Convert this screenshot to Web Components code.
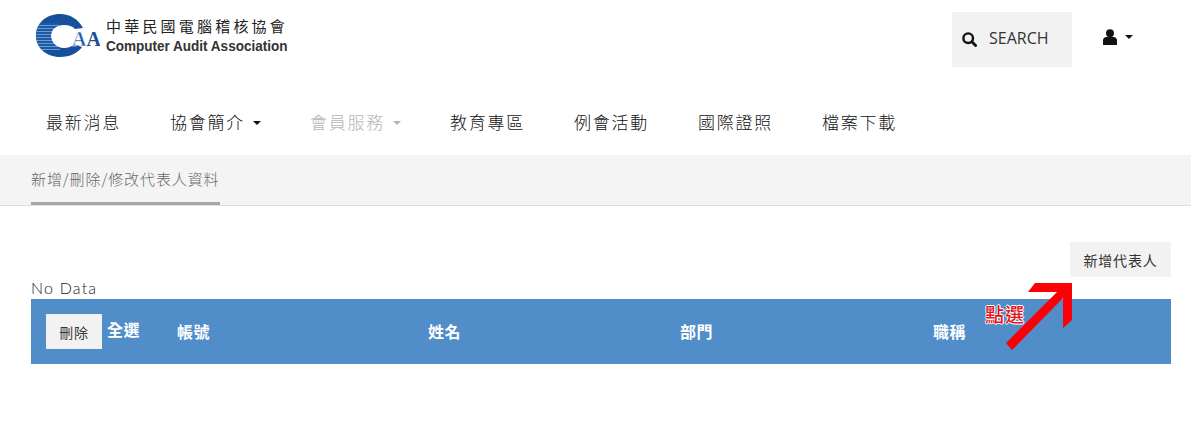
<!DOCTYPE html>
<html lang="zh-Hant">
<head>
<meta charset="utf-8">
<title>新增/刪除/修改代表人資料</title>
<style>
  html, body { margin: 0; background: #fff; }
  body { font-family: "Open Sans", "Noto Sans CJK TC", sans-serif; color: #222; }
</style>
</head>
<body>
<caa-header></caa-header>
<caa-nav>
  <caa-nav-item>最新消息</caa-nav-item>
  <caa-nav-item caret>協會簡介</caa-nav-item>
  <caa-nav-item caret disabled>會員服務</caa-nav-item>
  <caa-nav-item>教育專區</caa-nav-item>
  <caa-nav-item>例會活動</caa-nav-item>
  <caa-nav-item>國際證照</caa-nav-item>
  <caa-nav-item>檔案下載</caa-nav-item>
</caa-nav>
<caa-tabbar label="新增/刪除/修改代表人資料"></caa-tabbar>
<caa-reps></caa-reps>

<script>
const CJK = '"Noto Sans CJK TC", sans-serif';
const C_PATH = "M47 14C42 5 34 0 24 0C10 0 0 9.500 0 21.500C0 33.500 10 43 24 43C34 43 42 39 46 33L38 30C35 33 32 34 28 34C20 34 15 28 15 22C15 15 20 11 28 11C33 11 36 12 39 15Z";

class CaaLogo extends HTMLElement {
  constructor() {
    super();
    this.attachShadow({ mode: "open" }).innerHTML = `
      <style>
        :host { display:flex; align-items:flex-start; gap:6px; width:252px; height:44px; }
        svg { flex:none; width:64px; height:44px; display:block; }
        .text { display:flex; flex-direction:column; padding-top:3px; }
        .zh { font:400 15px/18px ${CJK}; letter-spacing:3.200px; color:#222; white-space:nowrap; }
        .en { font:700 15.500px/18px "Liberation Sans", sans-serif; color:#333; white-space:nowrap; margin-top:2px;
          display:block; transform:scaleX(.872); transform-origin:left center; }
      </style>
      <svg viewBox="0 0 64 44" aria-hidden="true">
        <defs>
          <pattern id="lines" width="4" height="3" patternUnits="userSpaceOnUse">
            <rect width="4" height="2.200" fill="#1a5aa6"/>
            <rect y="2.200" width="4" height=".8" fill="#86abd6"/>
          </pattern>
          <clipPath id="left"><rect x="0" y="9" width="24" height="27"/></clipPath>
        </defs>
        <path d="${C_PATH}" fill="#14509c"/>
        <path d="${C_PATH}" fill="url(#lines)" clip-path="url(#left)"/>
        <text x="36" y="32" font-family="Liberation Serif, serif" font-weight="700" font-size="20" fill="#1a5aa6" stroke="#fff" stroke-width=".5">A</text>
        <text x="50.500" y="32" font-family="Liberation Serif, serif" font-weight="700" font-size="20" fill="#1a4f98">A</text>
      </svg>
      <div class="text">
        <span class="zh">中華民國電腦稽核協會</span>
        <span class="en">Computer Audit Association</span>
      </div>`;
  }
}

class CaaHeader extends HTMLElement {
  constructor() {
    super();
    this.attachShadow({ mode: "open" }).innerHTML = `
      <style>
        :host { display:flex; height:100px; padding:14px 0 0 36px; box-sizing:border-box; align-items:flex-start; }
        .search {
          margin:-2px 0 0 auto; width:120px; height:55px; box-sizing:border-box; background:#f2f2f2;
          display:flex; align-items:center; gap:12px; padding:0 0 3px 10px;
          font:400 16px "Open Sans", sans-serif; color:#333;
        }
        .search svg { width:15px; height:15px; flex:none; margin-top:3px; }
        .user { display:flex; align-items:center; gap:8px; margin:15px 58px 0 31px; }
        .user svg { width:14px; height:16px; display:block; }
        .caret { width:0; height:0; border:4px solid transparent; border-top-color:#111; border-bottom:0; }
      </style>
      <caa-logo></caa-logo>
      <div class="search">
        <svg viewBox="0 0 15 15" aria-hidden="true"><circle cx="6.200" cy="6.200" r="4.800" fill="none" stroke="#111" stroke-width="2.400"/><path d="M9.800 9.800l3.800 3.800" stroke="#111" stroke-width="2.800" stroke-linecap="round"/></svg>
        <span>SEARCH</span>
      </div>
      <div class="user">
        <svg viewBox="0 0 14 16" aria-hidden="true"><circle cx="7" cy="4.200" r="4" fill="#111"/><path d="M0 16V11.500C0 9.500 1.500 8 3.500 8H10.500C12.500 8 14 9.500 14 11.500V16Z" fill="#111"/></svg>
        <span class="caret"></span>
      </div>`;
  }
}

class CaaNav extends HTMLElement {
  constructor() {
    super();
    this.attachShadow({ mode: "open" }).innerHTML = `
      <style>
        :host { display:flex; height:55px; padding-left:46px; gap:49px; align-items:flex-start; padding-top:9px; box-sizing:border-box; }
      </style>
      <slot></slot>`;
  }
}

class CaaNavItem extends HTMLElement {
  constructor() {
    super();
    this.attachShadow({ mode: "open" }).innerHTML = `
      <style>
        :host { display:flex; align-items:center; gap:8px; font:300 17px/26px ${CJK}; letter-spacing:1.750px; color:#111; white-space:nowrap; }
        :host([disabled]) { color:#b4b4b4; }
        .caret { display:none; width:0; height:0; border:4px solid transparent; border-top-color:currentColor; border-bottom:0; margin-top:2px; }
        :host([caret]) .caret { display:block; }
      </style>
      <slot></slot><span class="caret"></span>`;
  }
}

class CaaTabbar extends HTMLElement {
  constructor() {
    super();
    this.attachShadow({ mode: "open" }).innerHTML = `
      <style>
        :host { display:flex; height:51px; box-sizing:border-box; padding-left:31px; background:#f4f4f4; border-bottom:1px solid #ddd; }
        .tab { height:50px; box-sizing:border-box; padding-top:13px; border-bottom:3px solid #a6a6a6;
          font:300 15px/22px ${CJK}; letter-spacing:.9px; color:#666; white-space:nowrap; }
      </style>
      <div class="tab"></div>`;
    this.shadowRoot.querySelector(".tab").textContent = this.getAttribute("label") || "";
  }
}

class CaaButton extends HTMLElement {
  constructor() {
    super();
    this.attachShadow({ mode: "open" }).innerHTML = `
      <style>
        :host { display:flex; align-items:center; justify-content:center; background:#f2f2f2; color:#333; box-sizing:border-box;
          font:400 14px/1 ${CJK}; letter-spacing:.8px; white-space:nowrap; }
      </style>
      <slot></slot>`;
  }
}

class CaaTableHead extends HTMLElement {
  constructor() {
    super();
    this.attachShadow({ mode: "open" }).innerHTML = `
      <style>
        :host { display:grid; grid-template-columns:61px 70px 251px 252px 253px 252px; height:65px; box-sizing:border-box;
          background:#508dc9; color:#fff; padding-left:15px; font:700 16px/20px ${CJK}; letter-spacing:.5px; }
        caa-button { width:56px; height:35px; margin-top:15px; font-weight:400; }
        .all { padding-top:20px; }
        .col { padding-top:22px; }
      </style>
      <caa-button>刪除</caa-button>
      <span class="all">全選</span>
      <span class="col">帳號</span>
      <span class="col">姓名</span>
      <span class="col">部門</span>
      <span class="col">職稱</span>`;
  }
}

class CaaReps extends HTMLElement {
  constructor() {
    super();
    this.attachShadow({ mode: "open" }).innerHTML = `
      <style>
        :host { display:block; position:relative; padding:36px 20px 0 31px; }
        .actions { display:flex; justify-content:flex-end; }
        .actions caa-button { width:101px; height:35px; }
        .empty { font:300 16px/22px "Lato", sans-serif; letter-spacing:1.200px; color:#222; }
        /* red hand-drawn note on top of the screenshot */
        .arrow { position:absolute; left:1000px; top:75px; width:80px; height:75px; overflow:visible; }
        .note { position:absolute; left:985px; top:96px; font:500 19px/24px ${CJK}; letter-spacing:1px; color:#e8141c;
          text-shadow:1px 0 #fff,-1px 0 #fff,0 1px #fff,0 -1px #fff; white-space:nowrap; }
      </style>
      <div class="actions"><caa-button>新增代表人</caa-button></div>
      <div class="empty">No Data</div>
      <caa-table-head></caa-table-head>
      <svg class="arrow" viewBox="1000 281 80 75" aria-hidden="true">
        <polygon points="1035,283 1072,283 1072,320 1063,328 1063,298 1012,350 1006,343 1057,292 1028,292" fill="#fb0007"/>
      </svg>
      <span class="note">點選</span>`;
  }
}

customElements.define("caa-logo", CaaLogo);
customElements.define("caa-header", CaaHeader);
customElements.define("caa-nav", CaaNav);
customElements.define("caa-nav-item", CaaNavItem);
customElements.define("caa-tabbar", CaaTabbar);
customElements.define("caa-button", CaaButton);
customElements.define("caa-table-head", CaaTableHead);
customElements.define("caa-reps", CaaReps);
</script>
</body>
</html>
